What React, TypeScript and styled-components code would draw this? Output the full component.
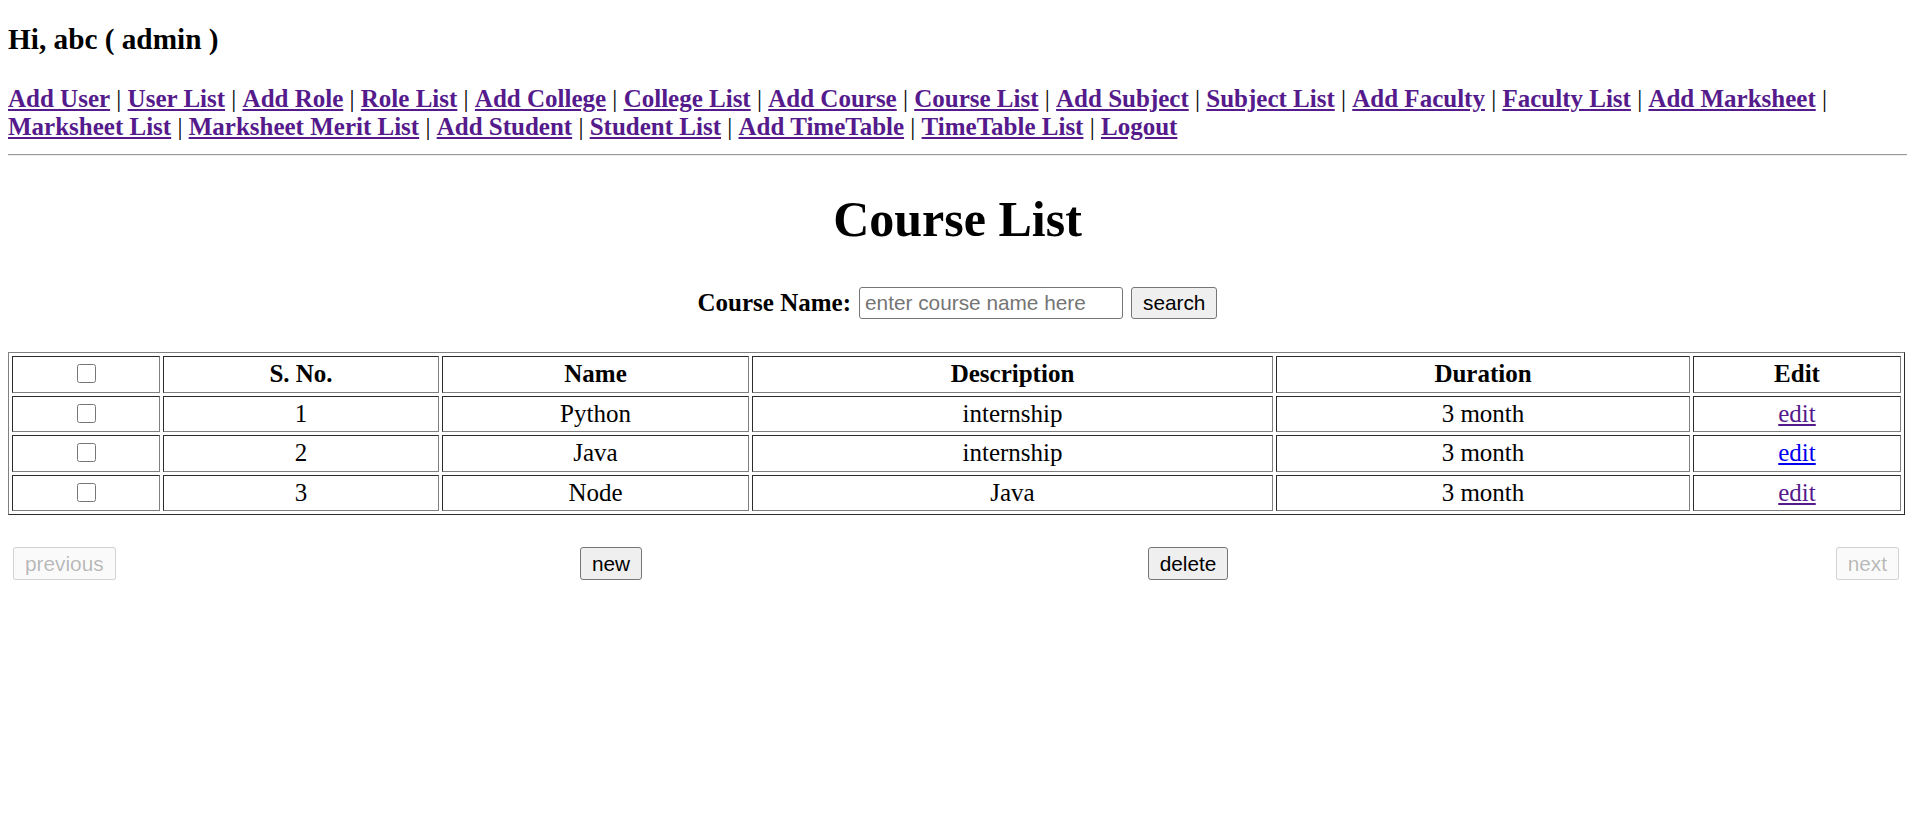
import React from "react";
import styled, { createGlobalStyle } from "styled-components";

const GlobalStyle = createGlobalStyle`
  html, body { margin: 0; padding: 0; background: #ffffff; }
  body {
    font-family: "Liberation Serif", "Times New Roman", serif;
    font-size: 25px;
    color: #000000;
  }
`;

const Page = styled.div`
  padding: 0 8px 40px;
`;

const Greeting = styled.h3`
  margin: 22px 0 0;
  font-size: 29.25px;
  line-height: 34px;
  font-weight: bold;
`;

const Nav = styled.nav`
  margin-top: 29px;
  font-size: 25px;
  line-height: 28px;
`;

const NavLink = styled.a`
  color: #551a8b;
  font-weight: bold;
  text-decoration: underline;
  cursor: pointer;
`;

const Sep = styled.span`
  font-weight: normal;
  color: #000000;
`;

const Rule = styled.hr`
  margin: 13px 0 0;
  height: 0;
  border: 0;
  border-top: 1px solid #9a9a9a;
  border-bottom: 1px solid #eeeeee;
`;

const Title = styled.h1`
  margin: 35px 0 0;
  font-size: 50px;
  line-height: 56px;
  font-weight: bold;
  text-align: center;
`;

const SearchRow = styled.form`
  margin-top: 40px;
  display: flex;
  justify-content: center;
  align-items: center;
  gap: 8px;
`;

const Label = styled.label`
  font-size: 25px;
  font-weight: bold;
  line-height: 28px;
`;

const TextInput = styled.input`
  box-sizing: border-box;
  width: 264px;
  height: 32px;
  padding: 1px 5px;
  border: 1px solid #767676;
  border-radius: 3px;
  background: #ffffff;
  font-family: "Liberation Sans", Arial, sans-serif;
  font-size: 20.8px;
  color: #000000;
  outline: none;
  &::placeholder {
    color: #757575;
  }
`;

const Button = styled.button<{ $tall?: boolean }>`
  box-sizing: border-box;
  height: ${(p) => (p.$tall ? "33px" : "32px")};
  padding: 0 11px;
  border: 1px solid #767676;
  border-radius: 3px;
  background: #efefef;
  font-family: "Liberation Sans", Arial, sans-serif;
  font-size: 20.8px;
  color: #000000;
  cursor: pointer;
  &:disabled {
    color: rgba(16, 16, 16, 0.3);
    background: rgba(239, 239, 239, 0.3);
    border-color: rgba(118, 118, 118, 0.3);
    cursor: default;
  }
`;

const Table = styled.table`
  width: calc(100% - 2px);
  margin-top: 33px;
  border-collapse: separate;
  border-spacing: 3px;
  border: 1px outset gray;
  table-layout: fixed;
`;

const Col = styled.col<{ $w?: number }>`
  width: ${(p) => (p.$w ? `${p.$w}px` : "auto")};
`;

const HeadCell = styled.th`
  box-sizing: border-box;
  border: 1px inset gray;
  padding: 3px 1px;
  font-size: 25px;
  line-height: 28.5px;
  font-weight: bold;
  text-align: center;
`;

const Cell = styled.td`
  box-sizing: border-box;
  border: 1px inset gray;
  padding: 3px 1px;
  font-size: 25px;
  line-height: 28.5px;
  text-align: center;
`;

const Check = styled.input`
  width: 19px;
  height: 19px;
  margin: 4px 0 0;
  vertical-align: top;
`;

const EditLink = styled.a<{ $visited?: boolean }>`
  color: ${(p) => (p.$visited ? "#551a8b" : "#0000ee")};
  text-decoration: underline;
  cursor: pointer;
`;

const Pager = styled.div`
  margin-top: 32px;
  padding: 0 8px 0 5px;
  display: grid;
  grid-template-columns: 287px 622px 532px 1fr;
  align-items: center;
`;

const PagerCell = styled.div<{ $align: "start" | "center" | "end" }>`
  display: flex;
  justify-content: ${(p) => p.$align};
`;

const links = [
  "Add User",
  "User List",
  "Add Role",
  "Role List",
  "Add College",
  "College List",
  "Add Course",
  "Course List",
  "Add Subject",
  "Subject List",
  "Add Faculty",
  "Faculty List",
  "Add Marksheet",
  "Marksheet List",
  "Marksheet Merit List",
  "Add Student",
  "Student List",
  "Add TimeTable",
  "TimeTable List",
  "Logout",
];

const courses = [
  { id: 1, name: "Python", description: "internship", duration: "3 month", visited: true },
  { id: 2, name: "Java", description: "internship", duration: "3 month", visited: false },
  { id: 3, name: "Node", description: "Java", duration: "3 month", visited: true },
];

export default function App() {
  return (
    <>
      <GlobalStyle />
      <Page>
        <Greeting>Hi, abc ( admin )</Greeting>
        <Nav>
          {links.map((l, i) => (
            <React.Fragment key={l}>
              <NavLink>{l}</NavLink>
              {i < links.length - 1 && <Sep> | </Sep>}
            </React.Fragment>
          ))}
        </Nav>
        <Rule />
        <Title>Course List</Title>
        <SearchRow onSubmit={(e) => e.preventDefault()}>
          <Label>Course Name:</Label>
          <TextInput type="text" placeholder="enter course name here" />
          <Button type="button">search</Button>
        </SearchRow>
        <Table>
          <colgroup>
            <Col $w={148} />
            <Col $w={276} />
            <Col $w={307} />
            <Col $w={521} />
            <Col $w={414} />
            <Col />
          </colgroup>
          <thead>
            <tr>
              <HeadCell>
                <Check type="checkbox" />
              </HeadCell>
              <HeadCell>S. No.</HeadCell>
              <HeadCell>Name</HeadCell>
              <HeadCell>Description</HeadCell>
              <HeadCell>Duration</HeadCell>
              <HeadCell>Edit</HeadCell>
            </tr>
          </thead>
          <tbody>
            {courses.map((c) => (
              <tr key={c.id}>
                <Cell>
                  <Check type="checkbox" />
                </Cell>
                <Cell>{c.id}</Cell>
                <Cell>{c.name}</Cell>
                <Cell>{c.description}</Cell>
                <Cell>{c.duration}</Cell>
                <Cell>
                  <EditLink $visited={c.visited}>edit</EditLink>
                </Cell>
              </tr>
            ))}
          </tbody>
        </Table>
        <Pager>
          <PagerCell $align="start">
            <Button $tall disabled>
              previous
            </Button>
          </PagerCell>
          <PagerCell $align="center">
            <Button $tall>new</Button>
          </PagerCell>
          <PagerCell $align="center">
            <Button $tall>delete</Button>
          </PagerCell>
          <PagerCell $align="end">
            <Button $tall disabled>
              next
            </Button>
          </PagerCell>
        </Pager>
      </Page>
    </>
  );
}
